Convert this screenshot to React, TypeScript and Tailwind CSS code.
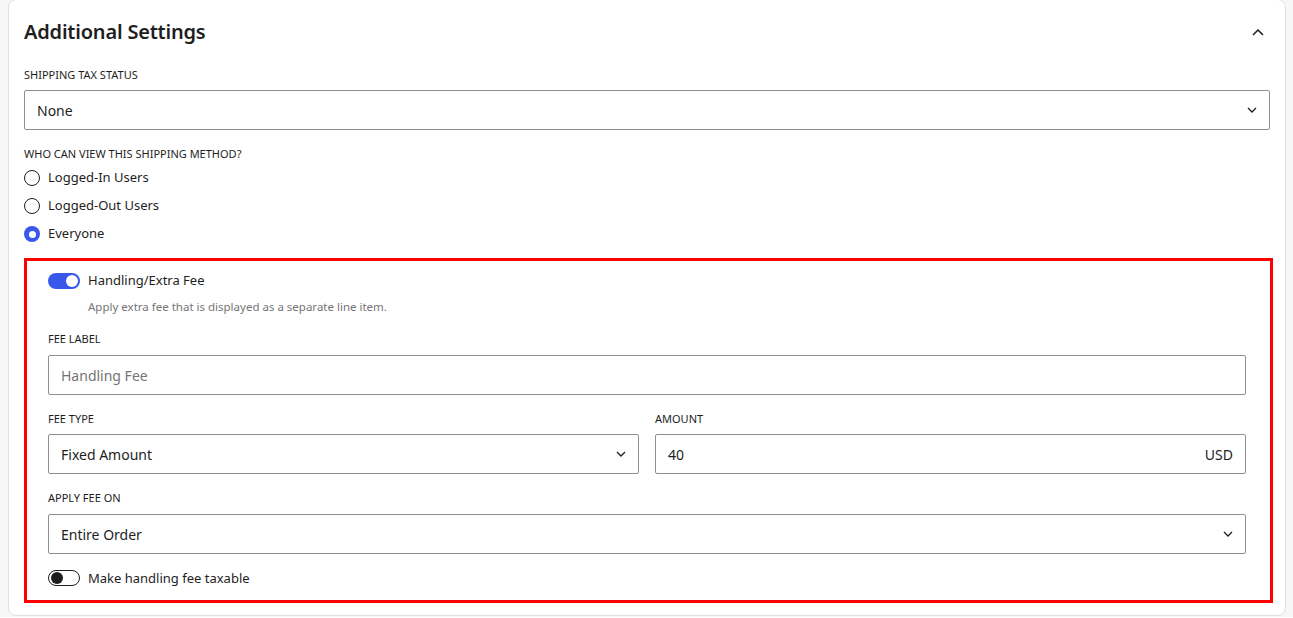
import React from 'react';

const font = { fontFamily: '"Noto Sans", "Liberation Sans", sans-serif' };

function ChevronDown() {
    return (
        <svg width="10" height="6" viewBox="0 0 10 6" fill="none" className="shrink-0">
            <path d="M1 1l4 4 4-4" stroke="#1e1e1e" strokeWidth="1.3" />
        </svg>
    );
}

function FieldLabel({ children, className = "mb-2" }: { children: React.ReactNode; className?: string }) {
    return <div className={`text-[11px] uppercase text-[#1e1e1e] leading-4 ${className}`}>{children}</div>;
}

function Select({ value }: { value: string }) {
    return (
        <div className="h-10 w-full flex items-center justify-between border border-[#8c8f94] rounded-[2px] bg-white pl-3 pr-3 text-[14px] text-[#1e1e1e]">
            <span>{value}</span>
            <ChevronDown />
        </div>
    );
}

function Radio({ label, checked }: { label: string; checked?: boolean }) {
    return (
        <div className="flex items-center gap-2 h-7">
            {checked ? (
                <span className="w-4 h-4 rounded-full bg-[#3858e9] flex items-center justify-center">
                    <span className="w-[7px] h-[7px] rounded-full bg-white" />
                </span>
            ) : (
                <span className="w-4 h-4 rounded-full border-[1.5px] border-[#1e1e1e] bg-white" />
            )}
            <span className="text-[13px] text-[#1e1e1e]">{label}</span>
        </div>
    );
}

function Toggle({ on }: { on?: boolean }) {
    return on ? (
        <span className="w-8 h-4 rounded-full bg-[#3858e9] flex items-center justify-end pr-[2px] shrink-0">
            <span className="w-3 h-3 rounded-full bg-white" />
        </span>
    ) : (
        <span className="w-8 h-4 rounded-full border border-[#1e1e1e] bg-white flex items-center pl-[2px] shrink-0">
            <span className="w-3 h-3 rounded-full bg-[#1e1e1e]" />
        </span>
    );
}

export default function App() {
    return (
        <div className="min-h-screen bg-[#f6f7f7] pl-2 pr-[7px]" style={font}>
            <div className="bg-white border border-[#e0e0e0] rounded-lg pl-[15px] pr-[15px] pt-4 pb-3 -mt-px">
                {/* Header */}
                <div className="flex items-center justify-between h-8 mb-[19px]">
                    <h2 className="text-[20px] font-semibold text-[#1e1e1e] tracking-[-0.2px]">Additional Settings</h2>
                    <svg width="12" height="7" viewBox="0 0 12 7" fill="none" className="mr-[6px]">
                        <path d="M1 6l5-5 5 5" stroke="#1e1e1e" strokeWidth="1.5" />
                    </svg>
                </div>

                <FieldLabel className="mb-[7px]">Shipping Tax Status</FieldLabel>
                <Select value="None" />

                <div className="mt-4">
                    <div className="text-[11px] uppercase text-[#1e1e1e] leading-4 mb-[2px]">Who can view this shipping method?</div>
                    <Radio label="Logged-In Users" />
                    <Radio label="Logged-Out Users" />
                    <Radio label="Everyone" checked />
                </div>

                {/* Handling fee */}
                <div className="mt-[10px] border-[3px] border-[#ff0000] -mr-[3px] pl-[21px] pr-[24px] pt-[12px] pb-[14px]">
                    <div className="flex items-center gap-2 h-4">
                        <Toggle on />
                        <span className="text-[13px] text-[#1e1e1e]">Handling/Extra Fee</span>
                    </div>
                    <div className="pl-10 mt-[9px] text-[11.5px] text-[#757575]">Apply extra fee that is displayed as a separate line item.</div>

                    <div className="mt-4">
                        <FieldLabel>Fee Label</FieldLabel>
                        <div className="h-10 w-full flex items-center border border-[#8c8f94] rounded-[2px] bg-white px-3 text-[14px] text-[#757575]">
                            Handling Fee
                        </div>
                    </div>

                    <div className="mt-4 grid grid-cols-2 gap-4">
                        <div>
                            <FieldLabel className="mb-[7px]">Fee Type</FieldLabel>
                            <Select value="Fixed Amount" />
                        </div>
                        <div>
                            <FieldLabel className="mb-[7px]">Amount</FieldLabel>
                            <div className="h-10 w-full flex items-center justify-between border border-[#8c8f94] rounded-[2px] bg-white px-3 text-[14px] text-[#1e1e1e]">
                                <span>40</span>
                                <span>USD</span>
                            </div>
                        </div>
                    </div>

                    <div className="mt-4">
                        <FieldLabel>Apply Fee On</FieldLabel>
                        <Select value="Entire Order" />
                    </div>

                    <div className="flex items-center gap-2 h-4 mt-4">
                        <Toggle />
                        <span className="text-[13px] text-[#1e1e1e]">Make handling fee taxable</span>
                    </div>
                </div>
            </div>
        </div>
    );
}
